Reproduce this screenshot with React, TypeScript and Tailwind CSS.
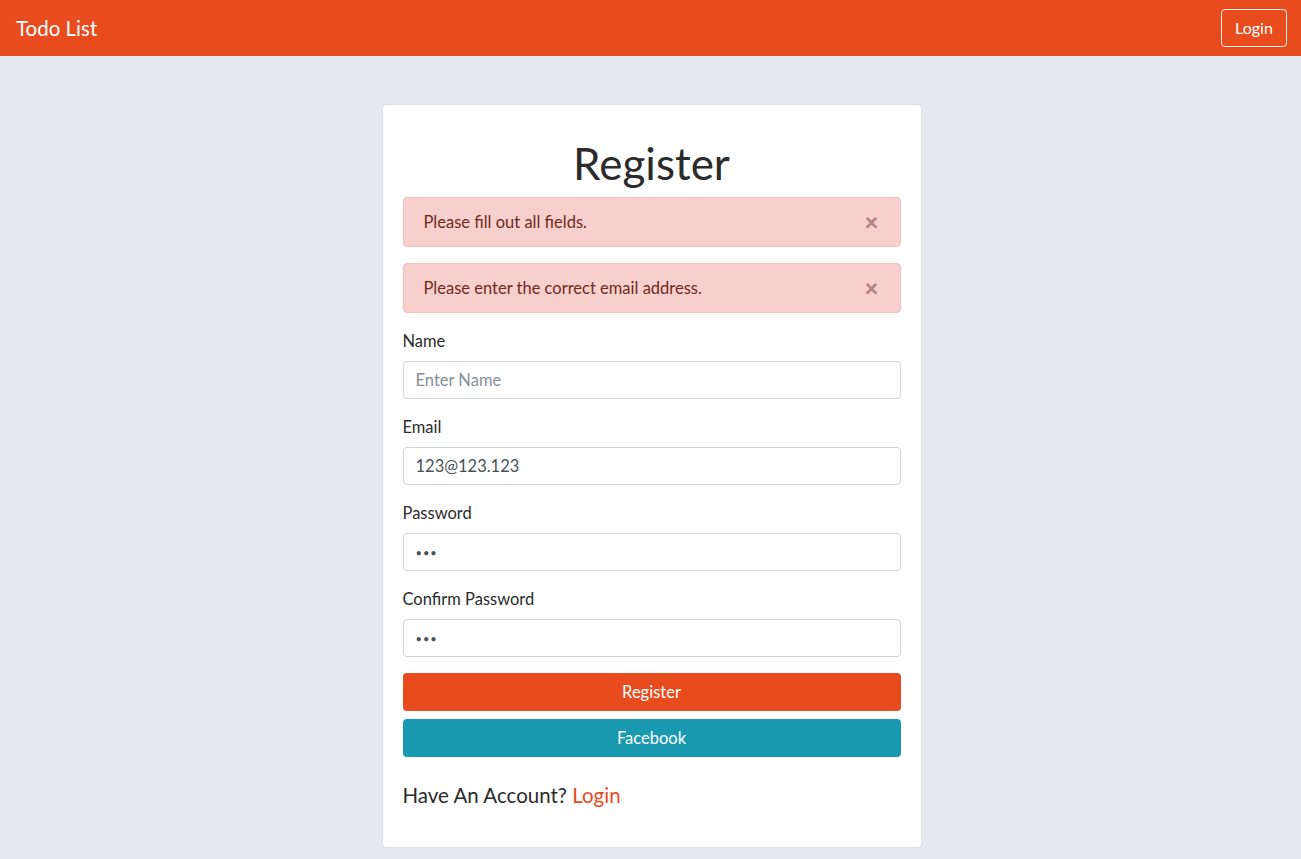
export default function App() {
  const font = { fontFamily: 'Lato, "Open Sans", sans-serif' };

  return (
    <div className="min-h-[859px] bg-[#e5e8ed]" style={font}>
      <nav className="h-14 bg-[#e84b1e] flex items-center justify-between pl-4 pr-[14px]">
        <span className="text-white text-[20.5px]">Todo List</span>
        <button className="h-[38px] w-[66px] border border-white/90 rounded text-white text-base">
          Login
        </button>
      </nav>

      <div className="pt-12 pl-[2px] flex justify-center">
        <div className="w-[540px] bg-white border border-[#dcdfe4] rounded px-5 pt-[30px] pb-[40px]">
          <h1 className="text-center text-[44px] leading-[56px] text-[#2b2b2b] mb-[6px]">Register</h1>

          <Alert text="Please fill out all fields." />
          <Alert text="Please enter the correct email address." />

          <Field label="Name" placeholder="Enter Name" />
          <Field label="Email" value="123@123.123" />
          <Field label="Password" value="123" type="password" />
          <Field label="Confirm Password" value="123" type="password" />

          <button className="w-full h-[38px] rounded bg-[#e84b1e] text-white text-[16.5px]">
            Register
          </button>
          <button className="w-full h-[38px] rounded bg-[#1899b0] text-white text-[16.5px] mt-2">
            Facebook
          </button>

          <p className="mt-[26px] text-[20.5px] leading-6 text-[#2b2b2b]">
            Have An Account? <a className="text-[#e84b1e]">Login</a>
          </p>
        </div>
      </div>
    </div>
  );
}

function Alert({ text }: { text: string }) {
  return (
    <div className="h-[50px] mb-4 rounded bg-[#f7d0ce] border border-[#f5bfbb] flex items-center justify-between pl-5 pr-[21px] text-[#72291a] text-[16.5px]">
      <span>{text}</span>
      <span className="text-[24px] leading-none font-black text-[#b3807d]">×</span>
    </div>
  );
}

function Field({
  label,
  placeholder,
  value,
  type = "text",
}: {
  label: string;
  placeholder?: string;
  value?: string;
  type?: string;
}) {
  const size = type === "password" ? "text-[11px] tracking-[1px]" : "text-[16.5px]";
  return (
    <div className="mb-4">
      <label className="block text-[16.5px] leading-6 text-[#2b2b2b] mb-2">{label}</label>
      <input
        type={type}
        placeholder={placeholder}
        defaultValue={value}
        className={`w-full h-[38px] px-3 border border-[#ced4da] rounded text-[#495057] placeholder:text-[#868e96] outline-none ${size}`}
      />
    </div>
  );
}
